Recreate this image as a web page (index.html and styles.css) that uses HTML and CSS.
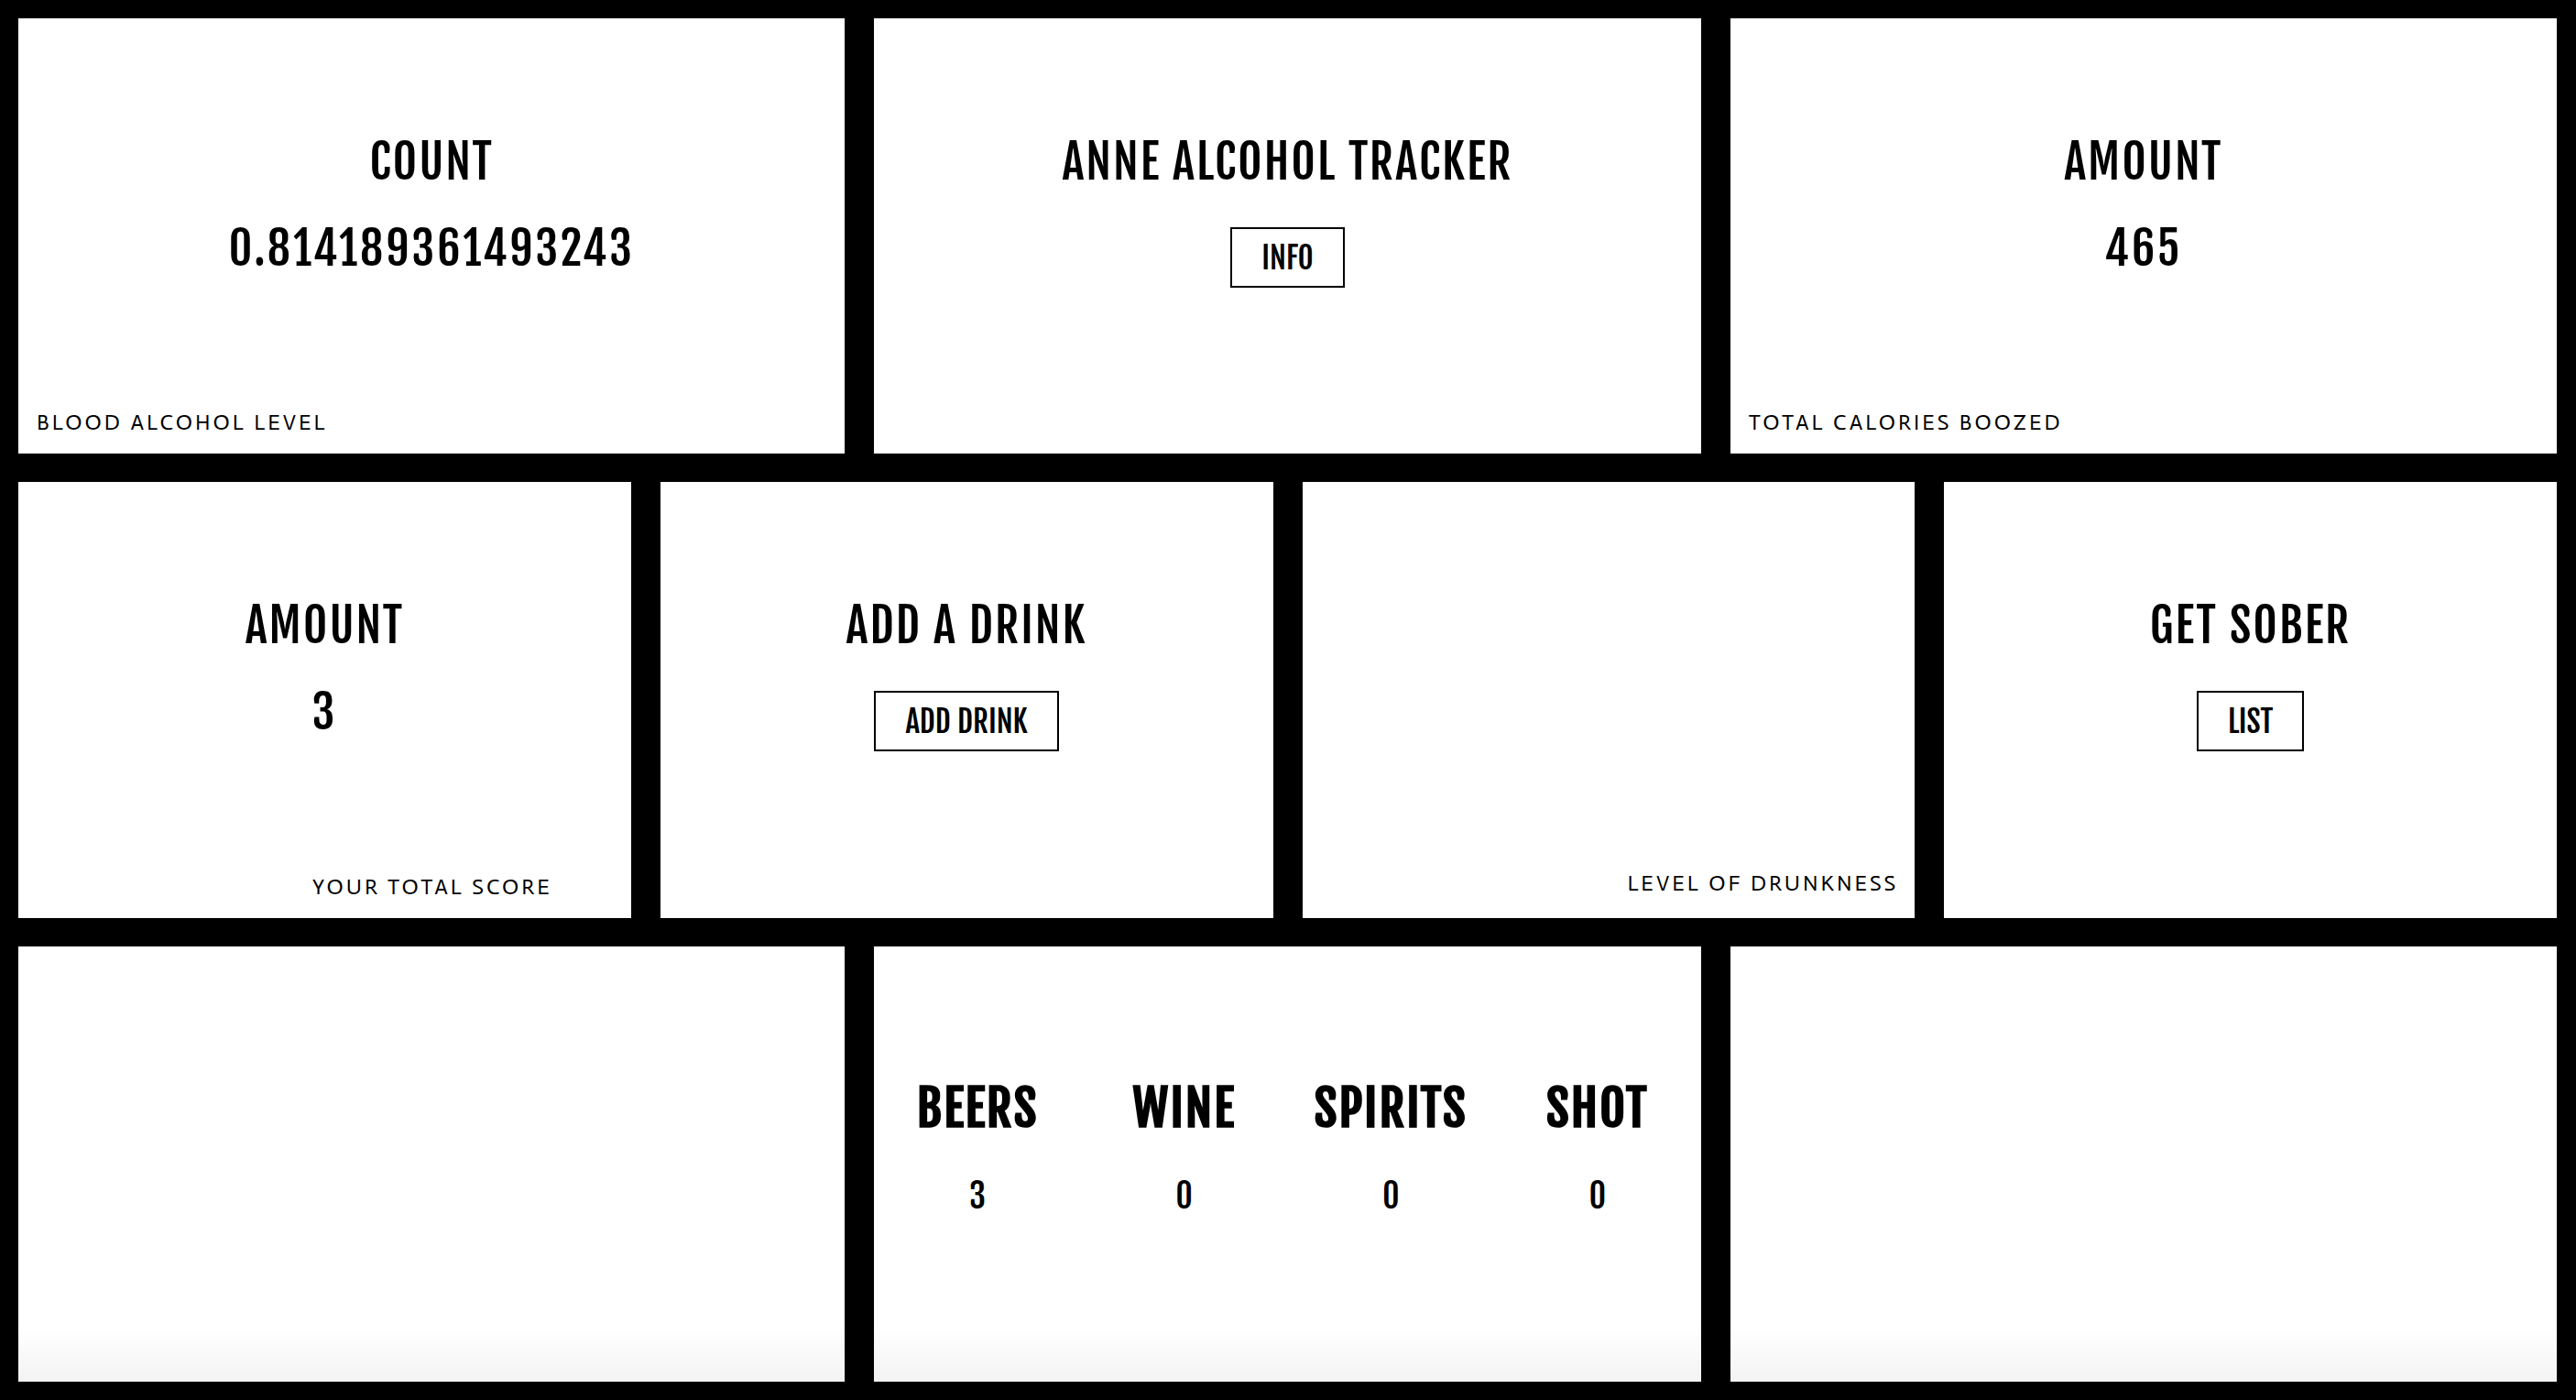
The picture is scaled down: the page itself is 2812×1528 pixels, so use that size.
FILE: index.html
```html
<!DOCTYPE html>
<html lang="en">
<head>
<meta charset="utf-8">
<meta name="viewport" content="width=device-width, initial-scale=1">
<title>Anne Alcohol Tracker</title>
<link rel="stylesheet" href="styles.css">
</head>
<body>
<main class="board">
  <div class="row">
    <section class="panel">
      <h2 class="heading">COUNT</h2>
      <p class="value">0.814189361493243</p>
      <p class="caption">BLOOD ALCOHOL LEVEL</p>
    </section>
    <section class="panel">
      <h1 class="heading">ANNE ALCOHOL TRACKER</h1>
      <button class="button" type="button">INFO</button>
    </section>
    <section class="panel">
      <h2 class="heading">AMOUNT</h2>
      <p class="value">465</p>
      <p class="caption">TOTAL CALORIES BOOZED</p>
    </section>
  </div>
  <div class="row">
    <section class="panel">
      <h2 class="heading">AMOUNT</h2>
      <p class="value">3</p>
      <p class="caption caption-score">YOUR TOTAL SCORE</p>
    </section>
    <section class="panel">
      <h2 class="heading">ADD A DRINK</h2>
      <button class="button" type="button">ADD DRINK</button>
    </section>
    <section class="panel">
      <p class="caption caption-end">LEVEL OF DRUNKNESS</p>
    </section>
    <section class="panel">
      <h2 class="heading">GET SOBER</h2>
      <button class="button" type="button">LIST</button>
    </section>
  </div>
  <div class="row row-shaded">
    <section class="panel"></section>
    <section class="panel">
      <table class="drinks">
        <thead>
          <tr><th scope="col">BEERS</th><th scope="col">WINE</th><th scope="col">SPIRITS</th><th scope="col">SHOT</th></tr>
        </thead>
        <tbody>
          <tr><td>3</td><td>0</td><td>0</td><td>0</td></tr>
        </tbody>
      </table>
    </section>
    <section class="panel"></section>
  </div>
</main>
</body>
</html>
```
FILE: styles.css
```css
* {
  box-sizing: border-box;
}

body {
  margin: 0;
  background: #000;
  color: #000;
  font-family: "Fjalla One", "Open Sans Condensed", "Liberation Sans", sans-serif;
}

.board {
  display: grid;
  grid-auto-rows: 1fr;
  gap: 31px;
  min-height: 100vh;
  padding: 20px 21px 20px 20px;
}

.row {
  display: grid;
  grid-auto-columns: minmax(0, 1fr);
  grid-auto-flow: column;
  gap: 32px;
}

.panel {
  display: flex;
  flex-direction: column;
  align-items: center;
  padding: 126px 0 16px;
  background: #fff;
}

.row-shaded .panel {
  background: linear-gradient(to top, #f3f3f3, #fff 60px);
}

.heading,
.value {
  margin: 0;
  font-weight: 400;
  line-height: 62px;
}

.heading {
  margin-bottom: 32px;
  font-size: 51px;
  letter-spacing: 2px;
}

.value {
  font-size: 50px;
  letter-spacing: 3px;
}

.button {
  height: 66px;
  margin-top: 8px;
  padding: 0 32px;
  border: 2px solid #000;
  background: #fff;
  color: #000;
  font-family: inherit;
  font-size: 33px;
  cursor: pointer;
}

.caption {
  align-self: flex-start;
  margin: auto 20px 0;
  font-family: Actor, "Open Sans", sans-serif;
  font-size: 24px;
  line-height: 36px;
  letter-spacing: 3px;
}

.caption-end {
  align-self: flex-end;
  margin-right: 18px;
  padding-bottom: 4px;
}

.caption-score {
  align-self: flex-end;
  margin-right: 86px;
}

.drinks {
  width: 100%;
  margin-top: 18px;
  border-collapse: collapse;
  table-layout: fixed;
  text-align: center;
}

.drinks th {
  padding: 0 0 30px;
  font-size: 54px;
  font-weight: 700;
  line-height: 66px;
  letter-spacing: 2px;
}

.drinks td {
  padding: 0;
  font-size: 36px;
  line-height: 66px;
}
```
